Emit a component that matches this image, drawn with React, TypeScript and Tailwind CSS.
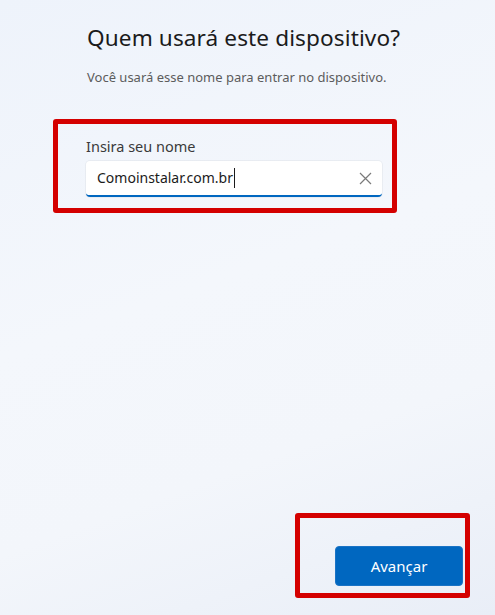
import React from "react";

export default function App() {
  const font = { fontFamily: '"Noto Sans", "Open Sans", sans-serif' };
  return (
    <div
      className="w-[495px] h-[615px] flex flex-col overflow-hidden bg-[linear-gradient(160deg,#eef3fb_0%,#f4f7fc_45%,#f3f6fb_70%,#e9eef7_100%)]"
      style={font}
    >
      <div className="pl-[87px] pt-[22px]">
        <h1 className="text-[22.6px] leading-[32px] text-[#1b1b1b] tracking-[0.1px]">
          Quem usará este dispositivo?
        </h1>
        <p className="mt-[14px] text-[13px] leading-[18px] text-[#5c5c5c]">
          Você usará esse nome para entrar no dispositivo.
        </p>
      </div>

      <div className="ml-[53px] mt-[33px] w-[344px] h-[94px] border-[5px] border-[#d40000] rounded-[3px] pl-[28px] pr-[10px] pt-[12px]">
        <div className="text-[14.5px] leading-[20px] text-[#3a3a3a]">Insira seu nome</div>
        <div className="mt-[5px] w-[296px] h-[36px] bg-white rounded-[4px] border-b-[2px] border-[#0067c0] flex items-center pl-[11px] pr-[10px] shadow-[0_0_0_1px_rgba(0,0,0,0.04)]">
          <span className="text-[14px] text-[#1b1b1b] leading-[20px]">Comoinstalar.com.br</span>
          <span className="w-[1px] h-[20px] bg-[#1b1b1b] ml-[1px]" />
          <div className="flex-1" />
          <svg width="13" height="13" viewBox="0 0 13 13">
            <path d="M1 1 L12 12 M12 1 L1 12" stroke="#7a7a7a" strokeWidth="1.2" fill="none" />
          </svg>
        </div>
      </div>

      <div className="flex-1" />

      <div className="flex justify-end pr-[25px] pb-[17px]">
        <div className="w-[175px] h-[85px] border-[5px] border-[#d40000] rounded-[3px] flex items-end justify-end pr-[2px] pb-[7px]">
          <button className="w-[128px] h-[40px] rounded-[4px] bg-[#0067c0] text-white text-[15px] leading-[20px] border border-[#1a73c5]">
            Avançar
          </button>
        </div>
      </div>
    </div>
  );
}
